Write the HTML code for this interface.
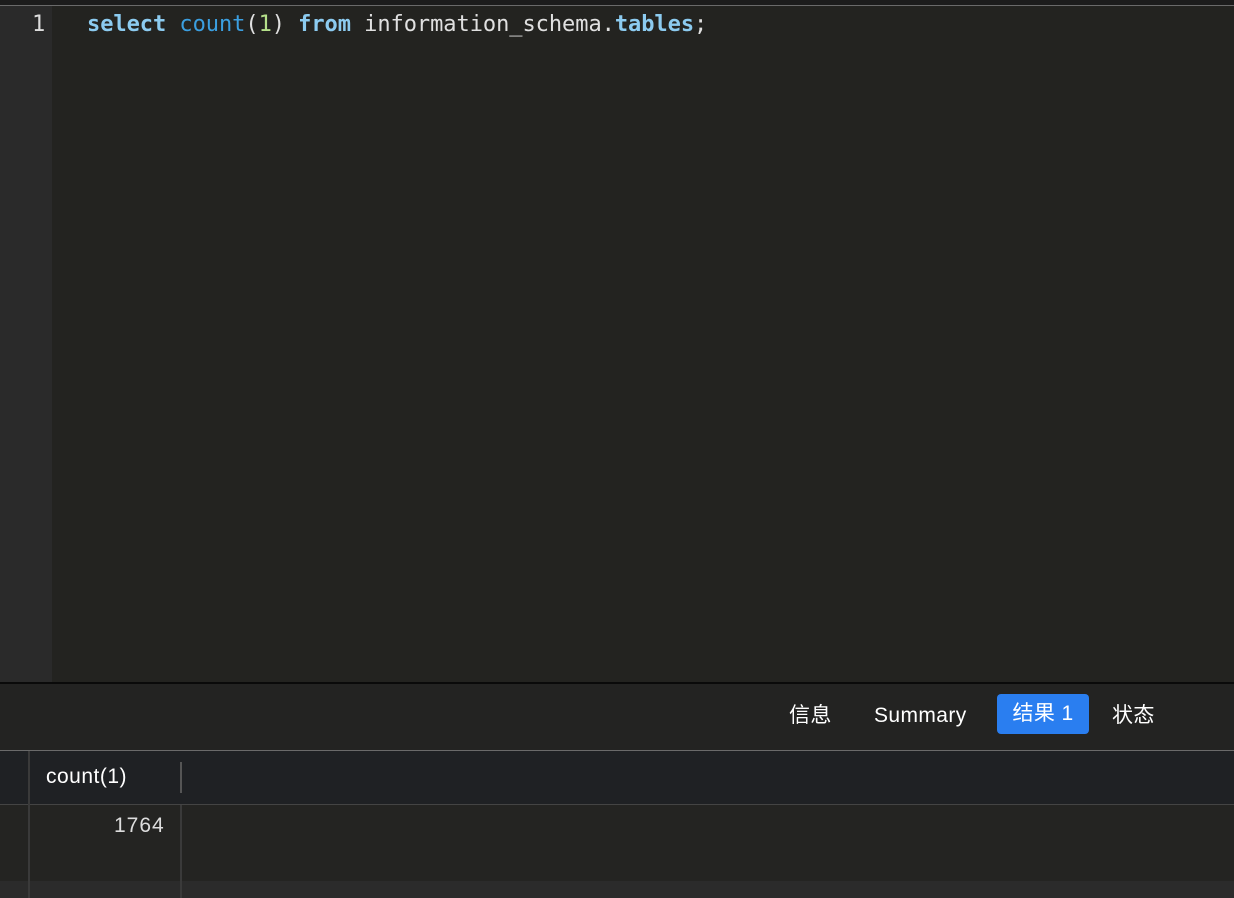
<!DOCTYPE html>
<html><head><meta charset="utf-8"><style>
body{margin:0;width:1234px;height:898px;background:#242424;position:relative;overflow:hidden;font-family:"Liberation Sans","Noto Sans CJK SC",sans-serif}
div{position:absolute}
.code{font-family:"DejaVu Sans Mono",monospace;font-size:22px;color:#e0e0e0;left:87px;top:12px;white-space:pre;letter-spacing:-0.05px}
.b{color:#8ccbf0;font-weight:bold}.f{color:#3b9fe0}.n{color:#b5e08a}
.tab{top:697px;height:37px;line-height:37px;color:#fff;font-size:21px;letter-spacing:0.4px}
</style></head><body>
<div style="left:0;top:0;width:1234px;height:5px;background:#1c1c1c"></div>
<div style="left:0;top:5px;width:1234px;height:1px;background:#6a6a6a"></div>
<div style="left:0;top:6px;width:52px;height:676px;background:#2a2a2a"></div>
<div style="left:52px;top:6px;width:1182px;height:676px;background:#232320"></div>
<div style="left:32px;top:12px;font-family:'DejaVu Sans Mono',monospace;font-size:22px;color:#ddd">1</div>
<div class="code"><span class="b">select</span> <span class="f">count</span>(<span class="n">1</span>) <span class="b">from</span> information_schema.<span class="b">tables</span>;</div>
<div style="left:0;top:682px;width:1234px;height:2px;background:#0a0a0a"></div>
<div style="left:0;top:684px;width:1234px;height:66px;background:#232322"></div>
<div class="tab" style="left:789px">信息</div>
<div class="tab" style="left:874px">Summary</div>
<div class="tab" style="left:997px;top:694px;height:40px;line-height:40px;width:92px;background:#2a7ef0;border-radius:4px;text-align:center">结果 1</div>
<div class="tab" style="left:1112px">状态</div>
<div style="left:0;top:750px;width:1234px;height:1px;background:#6a6a6a"></div>
<div style="left:0;top:751px;width:1234px;height:53px;background:#1f2124"></div>
<div style="left:46px;top:765px;color:#fff;font-size:21px;letter-spacing:0.5px">count(1)</div>
<div style="left:180px;top:762px;width:2px;height:31px;background:#555"></div>
<div style="left:0;top:804px;width:1234px;height:1px;background:#444"></div>
<div style="left:0;top:805px;width:1234px;height:76px;background:#242422"></div>
<div style="left:114px;top:814px;color:#ddd;font-size:21px;letter-spacing:1px">1764</div>
<div style="left:0;top:881px;width:1234px;height:17px;background:#2b2b2b"></div>
<div style="left:28px;top:751px;width:2px;height:147px;background:#3a3a3a"></div>
<div style="left:180px;top:805px;width:2px;height:93px;background:#3a3a3a"></div>
</body></html>
